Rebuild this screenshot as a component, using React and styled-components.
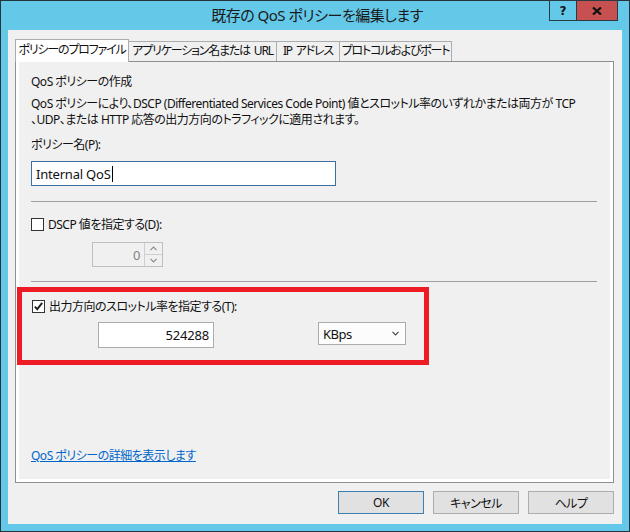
import React from "react";
import styled, { createGlobalStyle } from "styled-components";

const GlobalStyle = createGlobalStyle`
  body {
    margin: 0;
    background: #64c8e9;
    font-family: "Noto Sans", "Noto Sans CJK JP", sans-serif;
    font-feature-settings: "palt";
    letter-spacing: -0.5px;
  }
`;

const Frame = styled.div`
  width: 630px;
  height: 532px;
  box-sizing: border-box;
  background: #64c8e9;
  border: 1px solid #24343c;
  padding: 0 7px 7px;
  display: flex;
  flex-direction: column;
`;

const TitleBar = styled.div`
  height: 29px;
  display: grid;
  grid-template-columns: 1fr auto 1fr;
  align-items: start;
`;

const Title = styled.div`
  grid-column: 2;
  font-size: 15px;
  line-height: 29px;
  color: #1b1b1b;
  padding-left: 4px;
`;

const Captions = styled.div`
  grid-column: 3;
  justify-self: end;
  display: flex;
  margin-top: -1px;
  margin-right: 4px;
`;

const CaptionButton = styled.div`
  width: ${(p) => p.$w}px;
  height: 21px;
  box-sizing: border-box;
  border: 1px solid #2a3a42;
  margin-left: -1px;
  background: ${(p) => (p.$close ? "#c75050" : "#64c8e9")};
  display: flex;
  align-items: center;
  justify-content: center;
  font-family: "DejaVu Sans", sans-serif;
  font-weight: bold;
  font-size: 12px;
  letter-spacing: 0;
  color: #111;
`;

const Client = styled.div`
  flex: 1;
  background: #f0f0f0;
  padding: 9px 8px 9px 7px;
  display: flex;
  flex-direction: column;
`;

const TabStrip = styled.div`
  height: 23px;
  margin-bottom: -1px;
  display: flex;
  align-items: flex-start;
  position: relative;
  z-index: 1;
`;

const Tab = styled.div`
  width: ${(p) => p.$w}px;
  box-sizing: border-box;
  height: ${(p) => (p.$active ? 23 : 20)}px;
  margin-top: ${(p) => (p.$active ? 0 : 2)}px;
  margin-left: ${(p) => (p.$first ? 0 : -1)}px;
  border: 1px solid #acacac;
  border-bottom: none;
  background: ${(p) => (p.$active ? "#ffffff" : "#f0f0f0")};
  position: relative;
  z-index: ${(p) => (p.$active ? 2 : 1)};
  font-size: 12px;
  letter-spacing: -1.2px;
  word-spacing: 2px;
  line-height: ${(p) => (p.$active ? 20 : 18)}px;
  color: #111;
  text-align: center;
  white-space: nowrap;
`;

const Panel = styled.div`
  height: 422px;
  box-sizing: border-box;
  border: 1px solid #8e8f8f;
  background: #ffffff;
  padding: 0 3px 3px;
  display: flex;
`;

const Page = styled.div`
  flex: 1;
  background: #f0f0f0;
  padding: 12px 12px 15px;
  display: flex;
  flex-direction: column;
  font-size: 12px;
  color: #111;
`;

const Text = styled.div`
  line-height: 16px;
  margin-top: ${(p) => p.$mt || 0}px;
  white-space: nowrap;
`;

const TextBox = styled.div`
  box-sizing: border-box;
  width: ${(p) => p.$w}px;
  height: ${(p) => p.$h || 25}px;
  margin-top: ${(p) => p.$mt || 0}px;
  border: 1px solid ${(p) => (p.$focus ? "#3c6f9e" : "#acacac")};
  background: #ffffff;
  padding: 0 4px;
  display: flex;
  align-items: center;
  justify-content: ${(p) => (p.$right ? "flex-end" : "flex-start")};
  font-size: 13px;
  letter-spacing: -0.2px;
  color: #111;
`;

const Caret = styled.span`
  display: inline-block;
  width: 1px;
  height: 16px;
  background: #000;
  margin-left: 1px;
`;

const Separator = styled.div`
  height: 1px;
  width: 566px;
  background: #a0a0a0;
  margin-top: ${(p) => p.$mt}px;
`;

const CheckRow = styled.div`
  display: flex;
  align-items: center;
  gap: 4px;
  height: 16px;
  margin-top: ${(p) => p.$mt || 0}px;
  white-space: nowrap;
`;

const Box = styled.span`
  width: 13px;
  height: 13px;
  box-sizing: border-box;
  border: 1px solid #333;
  background: #fff;
  display: flex;
  align-items: center;
  justify-content: center;
`;

const Spinner = styled.div`
  display: flex;
  width: 71px;
  height: 25px;
  box-sizing: border-box;
  margin: 10px 0 0 61px;
  border: 1px solid #bfbfbf;
  background: #f0f0f0;
`;

const SpinValue = styled.div`
  flex: 1;
  display: flex;
  align-items: center;
  justify-content: flex-end;
  padding-right: 4px;
  font-size: 13px;
  color: #838383;
`;

const SpinButtons = styled.div`
  width: 17px;
  border-left: 1px solid #cfcfcf;
  display: flex;
  flex-direction: column;
`;

const SpinButton = styled.div`
  flex: 1;
  display: flex;
  align-items: center;
  justify-content: center;
  border-top: ${(p) => (p.$down ? "1px solid #cfcfcf" : "none")};
`;

const Highlight = styled.div`
  width: 412px;
  height: 78px;
  box-sizing: border-box;
  margin: 5px 0 0 -14px;
  border: 5px solid #ed1c24;
  padding: 6px 0 0 10px;
  display: flex;
  flex-direction: column;
`;

const RateRow = styled.div`
  display: flex;
  align-items: flex-start;
  margin: 8px 0 0 66px;
  gap: 104px;
`;

const Select = styled.div`
  width: 88px;
  height: 23px;
  box-sizing: border-box;
  border: 1px solid #acacac;
  background: #fcfcfc;
  display: flex;
  align-items: center;
  justify-content: space-between;
  padding: 0 6px 0 4px;
  font-size: 13px;
  color: #111;
`;

const Link = styled.a`
  margin-top: auto;
  color: #0066cc;
  text-decoration: underline;
  line-height: 16px;
  font-size: 12px;
  cursor: pointer;
`;

const Footer = styled.div`
  display: flex;
  justify-content: flex-end;
  gap: 9px;
  margin-top: 8px;
`;

const Button = styled.div`
  width: 86px;
  height: 23px;
  box-sizing: border-box;
  border: 1px solid ${(p) => (p.$default ? "#3c7fb1" : "#adadad")};
  background: #e1e1e1;
  display: flex;
  align-items: center;
  justify-content: center;
  font-size: 12px;
  color: #111;
`;

const Chevron = ({ up, color = "#888" }) => (
  <svg width="7" height="5" viewBox="0 0 7 5">
    <path
      d={up ? "M0.5 4.2 L3.5 1 L6.5 4.2" : "M0.5 0.8 L3.5 4 L6.5 0.8"}
      fill="none"
      stroke={color}
      strokeWidth="1.1"
    />
  </svg>
);

const CheckBox = ({ checked }) => (
  <Box>
    {checked && (
      <svg width="11" height="11" viewBox="0 0 11 11">
        <path d="M1.8 5.6 L4.2 8.2 L9.2 1.8" fill="none" stroke="#222" strokeWidth="1.9" />
      </svg>
    )}
  </Box>
);

const tabs = [
  { label: "ポリシーのプロファイル", w: 114 },
  { label: "アプリケーション名または URL", w: 149 },
  { label: "IP アドレス", w: 64 },
  { label: "プロトコルおよびポート", w: 113 },
];

export default function App() {
  return (
    <>
      <GlobalStyle />
      <Frame>
        <TitleBar>
          <Title>既存の QoS ポリシーを編集します</Title>
          <Captions>
            <CaptionButton $w={28}>?</CaptionButton>
            <CaptionButton $w={42} $close>
              <svg width="10" height="8" viewBox="0 0 10 8">
                <path d="M1 0.5 L9 7.5 M9 0.5 L1 7.5" stroke="#111" strokeWidth="2.2" />
              </svg>
            </CaptionButton>
          </Captions>
        </TitleBar>
        <Client>
          <TabStrip>
            {tabs.map((t, i) => (
              <Tab key={t.label} $w={t.w} $active={i === 0} $first={i === 0}>
                {t.label}
              </Tab>
            ))}
          </TabStrip>
          <Panel>
            <Page>
              <Text>QoS ポリシーの作成</Text>
              <Text $mt={6}>
                QoS ポリシーにより、DSCP (Differentiated Services Code Point) 値とスロットル率のいずれかまたは両方が TCP
              </Text>
              <Text>、UDP、または HTTP 応答の出力方向のトラフィックに適用されます。</Text>
              <Text $mt={9}>ポリシー名(P):</Text>
              <TextBox $w={305} $mt={8} $focus>
                Internal QoS
                <Caret />
              </TextBox>
              <Separator $mt={15} />
              <CheckRow $mt={14}>
                <CheckBox />
                DSCP 値を指定する(D):
              </CheckRow>
              <Spinner>
                <SpinValue>0</SpinValue>
                <SpinButtons>
                  <SpinButton>
                    <Chevron up />
                  </SpinButton>
                  <SpinButton $down>
                    <Chevron />
                  </SpinButton>
                </SpinButtons>
              </Spinner>
              <Separator $mt={14} />
              <Highlight>
                <CheckRow>
                  <CheckBox checked />
                  出力方向のスロットル率を指定する(T):
                </CheckRow>
                <RateRow>
                  <TextBox $w={116} $h={26} $right>
                    524288
                  </TextBox>
                  <Select>
                    KBps
                    <Chevron color="#444" />
                  </Select>
                </RateRow>
              </Highlight>
              <Link>QoS ポリシーの詳細を表示します</Link>
            </Page>
          </Panel>
          <Footer>
            <Button $default>OK</Button>
            <Button>キャンセル</Button>
            <Button>ヘルプ</Button>
          </Footer>
        </Client>
      </Frame>
    </>
  );
}
